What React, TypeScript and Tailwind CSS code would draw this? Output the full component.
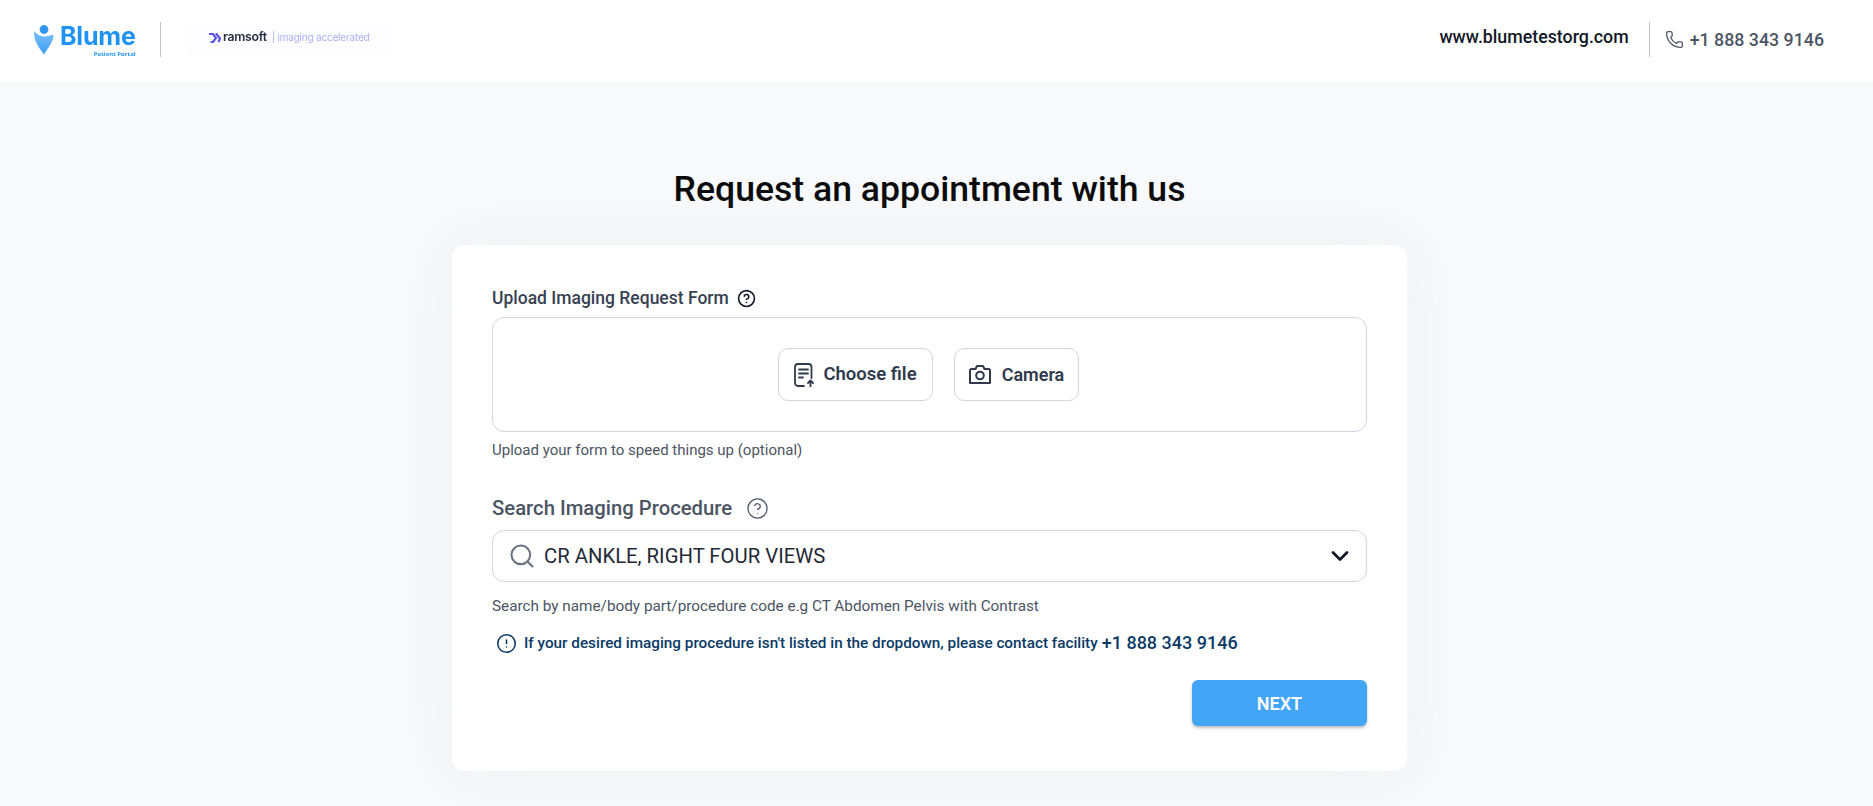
import { ChevronDown, Phone, Search, CircleHelp, CircleAlert } from "lucide-react"

function FileUploadIcon() {
  return (
    <svg width="21" height="24" viewBox="0 0 21 24" fill="none" stroke="#2f3a4c" strokeWidth="1.8" strokeLinecap="round" strokeLinejoin="round">
      <path d="M10 23H4a3 3 0 0 1-3-3V4a3 3 0 0 1 3-3h10.500a3 3 0 0 1 3 3v11" />
      <path d="M5 6.500h9M5 10.500h9M5 14.500h4" />
      <path d="M16.500 23.500v-5.500M14 20l2.500-2.500 2.500 2.500" />
    </svg>
  )
}

function CameraIcon() {
  return (
    <svg width="22" height="19" viewBox="0 0 22 19" fill="none" stroke="#2f3a4c" strokeWidth="2" strokeLinejoin="round">
      <path d="M1 5.500a1.500 1.500 0 0 1 1.500-1.500H6.500L8 1h6l1.500 3h4a1.500 1.500 0 0 1 1.500 1.500V18H1z" />
      <circle cx="11" cy="10.500" r="3.800" />
    </svg>
  )
}

function BlumeMark() {
  return (
    <svg width="21" height="30" viewBox="0 0 21 30" className="blur-[0.4px]">
      <defs>
        <linearGradient id="blumeBody" x1="0" y1="0" x2="0" y2="1">
          <stop offset="0" stopColor="#7cc2fb" />
          <stop offset="1" stopColor="#3b9df0" />
        </linearGradient>
      </defs>
      <circle cx="10" cy="4.500" r="4.400" fill="#2f95ee" />
      <path d="M0 6C3 9 6 11.500 10 11.500C13 11.500 16 10.500 19.500 9.500C19.500 15 17 19 10 29.500C4 21 -0.500 15 0 6Z" fill="url(#blumeBody)" />
    </svg>
  )
}

function Logos() {
  return (
    <div className="flex items-center">
      <div className="flex items-center gap-[5px] pl-[34px] w-[160px] blur-[0.3px]">
        <BlumeMark />
        <div className="flex flex-col items-end">
          <span className="text-[25px] leading-[28px] font-bold text-[#1e93f5] font-['Inter',sans-serif] tracking-[-0.2px]">Blume</span>
          <span className="text-[6px] leading-[8px] font-bold text-[#1e93f5] font-['Open_Sans',sans-serif]">Patient Portal</span>
        </div>
      </div>
      <div className="w-px h-[35px] bg-[#c4c4c4]" />
      <div className="ml-[26px] w-[205px] h-[29px] -mt-[4px] bg-[#fdfdff] flex items-center pl-[22px] blur-[0.3px]">
        <svg width="12" height="10" viewBox="0 0 12 10" fill="none" stroke="#5b56e8" strokeWidth="2.200">
          <path d="M0 1H4L7 5L4 9H1.500M6.500 1H7.500L11 5.500L9.500 9" />
        </svg>
        <span className="ml-[2px] text-[12.300px] font-semibold text-[#2a2e45] font-['Inter',sans-serif] tracking-[-0.3px]">ramsoft</span>
        <span className="ml-[5px] text-[10px] text-[#a9aef5] font-['Inter',sans-serif] tracking-[-0.2px]">| imaging accelerated</span>
      </div>
    </div>
  )
}

function ContactInfo() {
  return (
    <div className="flex items-center pr-[49px]">
      <span className="text-[17.800px] font-medium text-[#111827] leading-none -mt-[5px]">www.blumetestorg.com</span>
      <div className="w-px h-[35px] bg-[#c4c4c4] ml-[20px]" />
      <Phone className="ml-[15px] mr-[6px]" size={19} strokeWidth={1.6} color="#4b5563" />
      <span className="text-[17.800px] font-medium text-[#4b5563] leading-none">+1 888 343 9146</span>
    </div>
  )
}

function UploadField() {
  return (
    <div>
      <div className="flex items-center h-[24px] text-[17.500px] font-medium text-[#374151]">
        Upload Imaging Request Form
        <CircleHelp className="ml-[8px]" size={19} strokeWidth={2} color="#111827" />
      </div>
      <div className="mt-[7px] h-[115px] rounded-[12px] border border-[#d3d6e0] flex items-center justify-center gap-[21px] pr-[2px]">
        <button className="w-[155px] h-[53px] rounded-[10px] border border-[#d3d6e0] flex items-center justify-center gap-[8px] text-[18.500px] font-semibold text-[#2f3a4c]">
          <FileUploadIcon />
          Choose file
        </button>
        <button className="w-[125px] h-[53px] rounded-[10px] border border-[#d3d6e0] flex items-center justify-center gap-[11px] text-[18px] font-semibold text-[#2f3a4c]">
          <CameraIcon />
          <span className="-mt-[1px]">Camera</span>
        </button>
      </div>
      <p className="mt-[8px] text-[15px] leading-[20px] text-[#4b5563]">Upload your form to speed things up (optional)</p>
    </div>
  )
}

function ProcedureField() {
  return (
    <div className="mt-[36px]">
      <div className="flex items-center h-[24px] text-[20.300px] font-medium text-[#4b5563]">
        Search Imaging Procedure
        <CircleHelp className="ml-[14px]" size={23} strokeWidth={1.3} color="#4b5563" />
      </div>
      <div className="mt-[10px] h-[52px] rounded-[12px] border border-[#d3d6e0] flex items-center pl-[15px] pr-[12px]">
        <Search size={28} strokeWidth={1.8} color="#6b7280" />
        <span className="ml-[8px] text-[20.300px] text-[#1f2937] flex-1">CR ANKLE, RIGHT FOUR VIEWS</span>
        <ChevronDown size={28} strokeWidth={2.4} color="#111827" />
      </div>
      <p className="mt-[14px] text-[15.300px] leading-[20px] text-[#4b5563]">Search by name/body part/procedure code e.g CT Abdomen Pelvis with Contrast</p>
      <div className="mt-[16px] h-[22px] ml-[4px] flex items-center text-[15.300px] font-medium text-[#0b3a66]">
        <CircleAlert size={21} strokeWidth={1.8} color="#0b3a66" />
        <span className="ml-[7px] mt-[1px]">If your desired imaging procedure isn't listed in the dropdown, please contact facility</span>
        <span className="ml-[4px] -mt-[1px] text-[18px]">+1 888 343 9146</span>
      </div>
    </div>
  )
}

export default function App() {
  return (
    <div className="h-[806px] overflow-hidden bg-[#f8f9fb] font-['Roboto',sans-serif]">
      <header className="h-[82px] pb-[3px] bg-white flex items-center justify-between">
        <Logos />
        <ContactInfo />
      </header>
      <main className="flex flex-col items-center pt-[83px] pr-[14px]">
        <h1 className="text-[35.600px] leading-[48px] font-medium text-[#0a0a0a]">Request an appointment with us</h1>
        <section className="mt-[32px] w-[955px] h-[526px] shrink-0 bg-white rounded-[12px] px-[40px] pt-[41px] shadow-[0_0_60px_rgba(228,231,238,0.4)]">
          <UploadField />
          <ProcedureField />
          <div className="mt-[26px] flex justify-end">
            <button className="w-[175px] h-[46px] rounded-[6px] bg-[#42a5f5] text-white text-[18px] font-semibold shadow-[0_2px_3px_rgba(0,0,0,0.25)]">NEXT</button>
          </div>
        </section>
      </main>
    </div>
  )
}
